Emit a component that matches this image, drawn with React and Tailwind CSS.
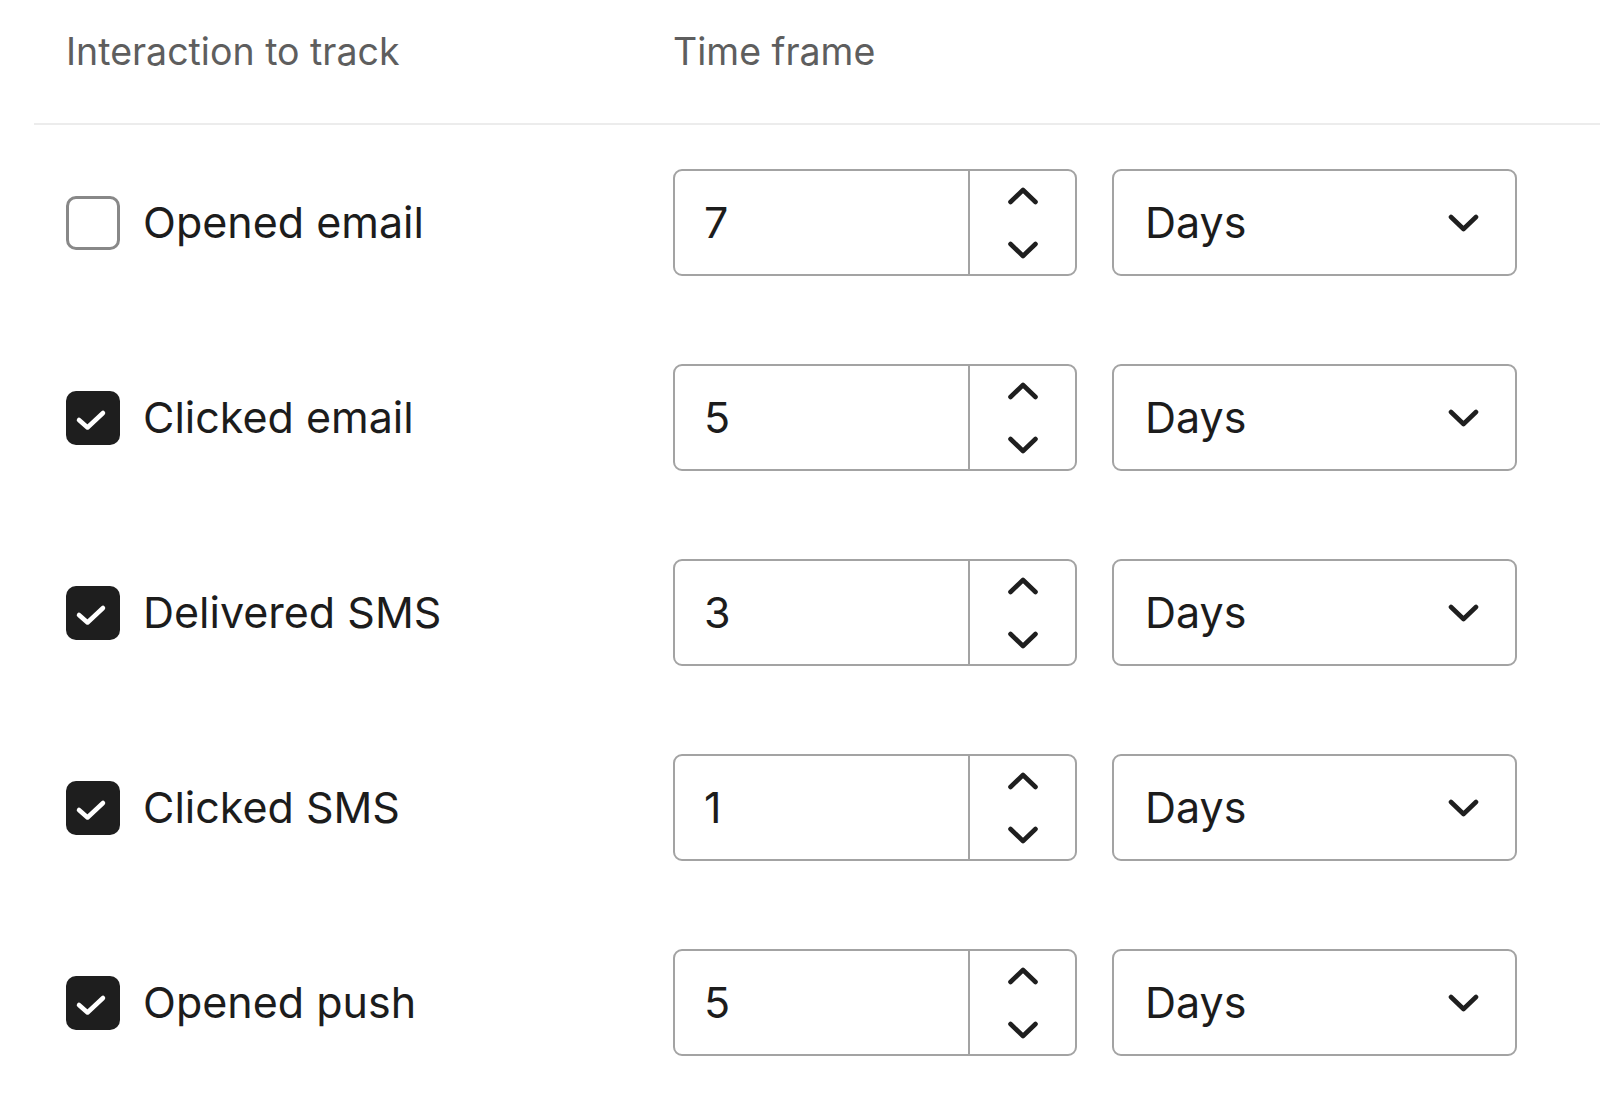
import React, { useState } from 'react';

const rowsData = [
  { label: 'Opened email', checked: false, value: 7 },
  { label: 'Clicked email', checked: true, value: 5 },
  { label: 'Delivered SMS', checked: true, value: 3 },
  { label: 'Clicked SMS', checked: true, value: 1 },
  { label: 'Opened push', checked: true, value: 5 },
];

function Chevron({ up = false, className = '' }) {
  return (
    <svg viewBox="0 0 32 18" className={className} fill="none">
      <path
        d={up ? 'M3.5 15 L16 3 L28.5 15' : 'M3.5 3 L16 15 L28.5 3'}
        stroke="#1f1f1f"
        strokeWidth="4.6"
        strokeLinecap="round"
        strokeLinejoin="round"
      />
    </svg>
  );
}

function Checkbox({ checked, onChange }) {
  if (!checked) {
    return (
      <button
        onClick={onChange}
        className="w-[54px] h-[54px] shrink-0 rounded-[10px] border-[3px] border-[#888888] bg-white"
      />
    );
  }
  return (
    <button
      onClick={onChange}
      className="w-[54px] h-[54px] shrink-0 rounded-[10px] bg-[#1e1e1e] flex items-center justify-center"
    >
      <svg viewBox="0 0 54 54" className="w-[54px] h-[54px]" fill="none">
        <path
          d="M13 29 L21.5 36.5 L37 22"
          stroke="white"
          strokeWidth="4.5"
          strokeLinecap="round"
          strokeLinejoin="round"
        />
      </svg>
    </button>
  );
}

function NumberStepper({ value }) {
  return (
    <div className="w-[404px] h-[107px] flex rounded-[9px] border-2 border-[#a3a3a3] bg-white overflow-hidden">
      <div className="flex-1 flex items-center pl-[29px] text-[43px] text-[#1c1c1c]">{value}</div>
      <div className="w-[107px] border-l-2 border-[#a3a3a3] flex flex-col items-center justify-center gap-[36px]">
        <Chevron up className="w-[32px] h-[18px]" />
        <Chevron className="w-[32px] h-[18px]" />
      </div>
    </div>
  );
}

function UnitSelect() {
  return (
    <div className="w-[405px] h-[107px] flex items-center justify-between rounded-[9px] border-2 border-[#a3a3a3] bg-white pl-[31px] pr-[35px]">
      <span className="text-[43px] text-[#1c1c1c]">Days</span>
      <Chevron className="w-[33px] h-[18px]" />
    </div>
  );
}

export default function App() {
  const [rows, setRows] = useState(rowsData);

  const toggle = (i) =>
    setRows(rows.map((r, idx) => (idx === i ? { ...r, checked: !r.checked } : r)));

  return (
    <div className="w-[1600px] h-[1097px] bg-white overflow-hidden font-['Inter','Liberation_Sans',sans-serif]">
      <div className="pl-[34px]">
        {/* Header */}
        <div className="h-[125px] flex items-center pl-[32px] pb-[18px] border-b-2 border-[#ececec] text-[37.5px] text-[#5e5e5e]">
          <div className="w-[607px]">Interaction to track</div>
          <div>Time frame</div>
        </div>

        {/* Rows */}
        <div className="pt-[44px] flex flex-col gap-[88px]">
          {rows.map((row, i) => (
            <div key={row.label} className="h-[107px] flex items-center pl-[32px]">
              <div className="w-[607px] flex items-center gap-[23px]">
                <Checkbox checked={row.checked} onChange={() => toggle(i)} />
                <span className="text-[43px] text-[#1c1c1c]">{row.label}</span>
              </div>
              <div className="flex items-center gap-[35px]">
                <NumberStepper value={row.value} />
                <UnitSelect />
              </div>
            </div>
          ))}
        </div>
      </div>
    </div>
  );
}
